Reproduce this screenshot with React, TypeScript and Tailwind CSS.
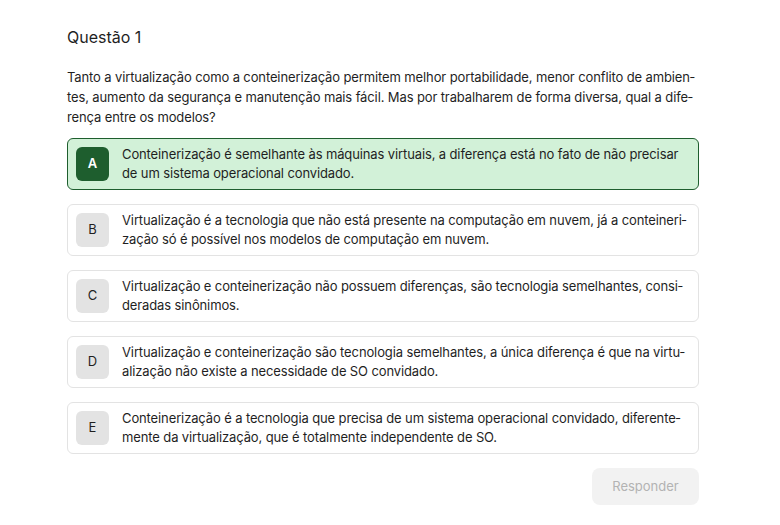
import { useState } from "react"

const options = [
  { letter: "A", text: "Conteinerização é semelhante às máquinas virtuais, a diferença está no fato de não precisar de um sistema operacional convidado." },
  { letter: "B", text: "Virtualização é a tecnologia que não está presente na computação em nuvem, já a conteineri\u00ADzação só é possível nos modelos de computação em nuvem." },
  { letter: "C", text: "Virtualização e conteinerização não possuem diferenças, são tecnologia semelhantes, consi\u00ADderadas sinônimos." },
  { letter: "D", text: "Virtualização e conteinerização são tecnologia semelhantes, a única diferença é que na virtu\u00ADalização não existe a necessidade de SO convidado." },
  { letter: "E", text: "Conteinerização é a tecnologia que precisa de um sistema operacional convidado, diferente\u00ADmente da virtualização, que é totalmente independente de SO." },
]

const App = () => {
  const [selected, setSelected] = useState("A")

  return (
    <main className="min-h-screen bg-white font-['Inter',sans-serif] text-[#1f1f1f]">
      <section className="w-[633px] ml-[67px] pt-[26px]">
        <h1 className="text-[16px] leading-[22px] mb-[19px]">Questão 1</h1>

        {/* enunciado */}
        <p className="text-[13px] leading-[20px] tracking-[-0.12px] mb-[11px]">
          Tanto a virtualização como a conteinerização permitem melhor portabilidade, menor conflito de ambien&shy;tes, aumento da segurança e manutenção mais fácil. Mas por trabalharem de forma diversa, qual a dife&shy;rença entre os modelos?
        </p>

        {/* alternativas */}
        <div className="flex flex-col gap-[14px] w-[632px]">
          {options.map((opt) => {
            const active = selected === opt.letter
            return (
              <div
                key={opt.letter}
                onClick={() => setSelected(opt.letter)}
                className={
                  active
                    ? "flex items-center gap-[13px] h-[52px] pl-[8px] pr-[9px] rounded-[6px] border border-[#1e5e2e] bg-[#d2f1d8] cursor-pointer"
                    : "flex items-center gap-[13px] h-[52px] pl-[8px] pr-[9px] rounded-[6px] border border-[#e3e3e3] bg-white cursor-pointer"
                }
              >
                <span
                  className={
                    active
                      ? "shrink-0 w-[33px] h-[34px] rounded-[6px] bg-[#1e5e2e] text-white text-[13px] font-semibold flex items-center justify-center"
                      : "shrink-0 w-[33px] h-[34px] rounded-[6px] bg-[#e3e3e3] text-[#1f1f1f] text-[13px] flex items-center justify-center"
                  }
                >
                  {opt.letter}
                </span>
                <span className="text-[13px] leading-[19px] tracking-[-0.12px]">{opt.text}</span>
              </div>
            )
          })}
        </div>

        <div className="flex justify-end mt-[14px] w-[632px]">
          <button
            disabled
            className="w-[107px] h-[37px] rounded-[8px] bg-[#f2f2f2] text-[#b3b3b3] text-[13px]"
          >
            Responder
          </button>
        </div>
      </section>
    </main>
  )
}

export default App
